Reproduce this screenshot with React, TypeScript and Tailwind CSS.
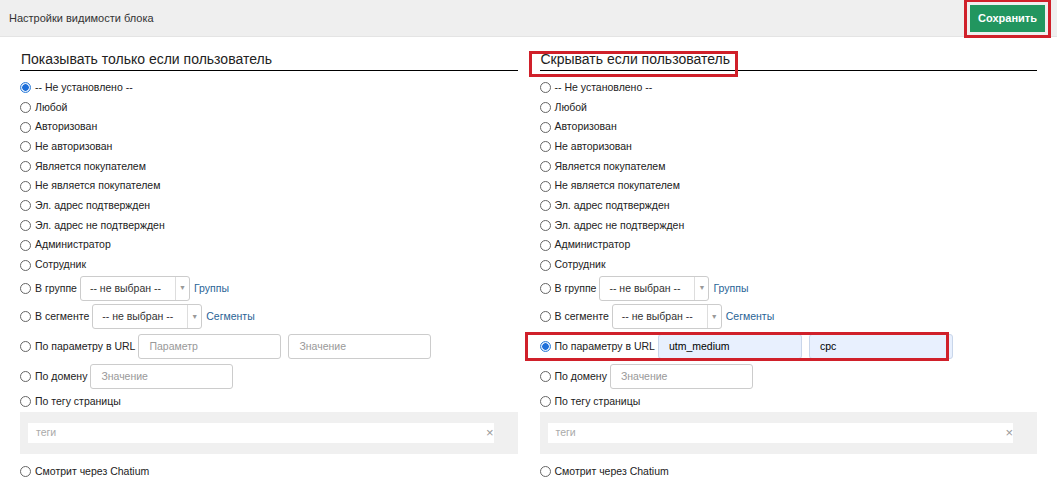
import React from "react";

const Radio = ({ on }: { on?: boolean }) => (
  <span className={`inline-block w-[11px] h-[11px] rounded-full border shrink-0 mr-[4px] ${on ? "border-[#2f7ed8] bg-[radial-gradient(circle,#1e6fd9_0_3px,#dbe9fb_3.5px)]" : "border-[#666] bg-white"}`} />
);

const Row = ({ label, on }: { label: string; on?: boolean }) => (
  <div className="flex items-center h-[19.7px]"><Radio on={on} /><span>{label}</span></div>
);

const Select = ({ w }: { w: number }) => (
  <div className="flex h-[25px] border border-[#ccc] rounded-[3px] bg-white ml-[3px]" style={{ width: w }}>
    <div className="flex-1 flex items-center pl-[9px] text-[#333]">-- не выбран --</div>
    <div className="w-[14px] border-l border-[#ddd] flex items-center justify-center text-[7px] text-[#999]">▼</div>
  </div>
);

const Input = ({ w, ph, val, blue, ml = 3 }: { w: number; ph?: string; val?: string; blue?: boolean; ml?: number }) => (
  <div className={`h-[25px] border rounded-[3px] flex items-center pl-[10px] ${blue ? "bg-[#e8f0fe] border-[#c9d6ea] text-black" : "bg-white border-[#ccc] text-[#999]"}`} style={{ width: w, marginLeft: ml }}>
    {val ?? ph}
  </div>
);

const Column = ({ right }: { right?: boolean }) => (
  <div className="flex-1 relative">
    <div className="relative h-[34px] flex items-end">
      <div className="text-[14px] text-[#222] pb-[1px] pl-[1px]">{right ? "Скрывать если пользователь" : "Показывать только если пользователь"}</div>
      <div className="absolute left-0 right-0 bottom-0 h-[1px] bg-black" />
      {right && <div className="absolute left-[-11px] top-[14px] w-[209px] h-[26px] border-[3px] border-[#d0202a]" />}
    </div>
    <div className="pt-[7px]">
      <Row label="-- Не установлено --" on={!right} />
      <Row label="Любой" />
      <Row label="Авторизован" />
      <Row label="Не авторизован" />
      <Row label="Является покупателем" />
      <Row label="Не является покупателем" />
      <Row label="Эл. адрес подтвержден" />
      <Row label="Эл. адрес не подтвержден" />
      <Row label="Администратор" />
      <Row label="Сотрудник" />
      <div className="flex items-center h-[27px]"><Radio /><span>В группе</span><Select w={110} /><span className="ml-[4px] text-[#2a6496]">Группы</span></div>
      <div className="flex items-center h-[30px]"><Radio /><span>В сегменте</span><Select w={110} /><span className="ml-[4px] text-[#2a6496]">Сегменты</span></div>
      <div className="relative flex items-center h-[30px]">
        <Radio on={right} /><span>По параметру в URL</span>
        {right ? (<><Input w={144} val="utm_medium" blue /><Input w={144} val="cpc" blue ml={7} /></>) : (<><Input w={143} ph="Параметр" /><Input w={143} ph="Значение" ml={7} /></>)}
        {right && <div className="absolute left-[-15px] top-[0px] w-[424px] h-[29px] border-[3px] border-[#d0202a]" />}
      </div>
      <div className="flex items-center h-[30px]"><Radio /><span>По домену</span><Input w={143} ph="Значение" /></div>
      <Row label="По тегу страницы" />
      <div className="bg-[#f0f0f0] h-[42px] flex items-center pl-[8px] pr-[24px] relative">
        <div className="flex-1 h-[20px] bg-white flex items-center pl-[8px] text-[#aaa]">теги</div>
        <span className="absolute right-[24px] text-[#999] text-[13px]">×</span>
      </div>
      <div className="h-[8px]" />
      <Row label="Смотрит через Chatium" />
    </div>
  </div>
);

export default function App() {
  return (
    <div className="w-[1057px] h-[493px] bg-white text-[10.5px] text-[#222] overflow-hidden" style={{ fontFamily: '"Liberation Sans", Arial, sans-serif' }}>
      <div className="h-[37px] bg-[#efefef] flex items-center justify-between pl-[9px] pr-[6px] border-b border-[#e4e4e4]">
        <span className="text-[11px] text-[#333]">Настройки видимости блока</span>
        <div className="border-[3px] border-[#d0202a] p-[3px]">
          <div className="bg-[#22965f] text-white text-[11px] font-bold h-[27px] px-[8px] flex items-center">Сохранить</div>
        </div>
      </div>
      <div className="flex gap-[22px] pl-[20px] pr-[20px]">
        <Column />
        <Column right />
      </div>
    </div>
  );
}
